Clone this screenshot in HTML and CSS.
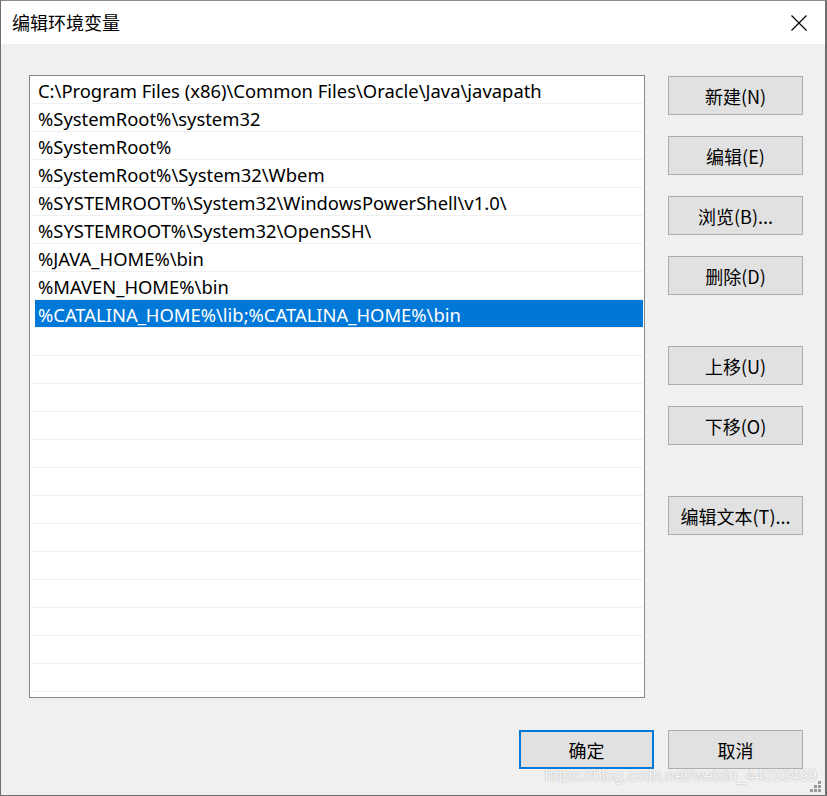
FILE: index.html
```html
<!DOCTYPE html>
<html lang="zh-CN">
<head>
    <meta charset="UTF-8">
    <title>编辑环境变量</title>
    <link rel="stylesheet" href="styles.css">
</head>
<body>
    <div class="window">
        <div class="titlebar">
            <span class="title">编辑环境变量</span>
            <svg class="close" width="16" height="16" viewBox="0 0 16 16">
                <path d="M0.5 0.5 L15.5 15.5 M15.5 0.5 L0.5 15.5" stroke="#000" stroke-width="1.2" fill="none"/>
            </svg>
        </div>

        <div class="content">
            <div class="main">
                <div class="list">
                    <div class="row">C:\Program Files (x86)\Common Files\Oracle\Java\javapath</div>
                    <div class="row">%SystemRoot%\system32</div>
                    <div class="row">%SystemRoot%</div>
                    <div class="row">%SystemRoot%\System32\Wbem</div>
                    <div class="row">%SYSTEMROOT%\System32\WindowsPowerShell\v1.0\</div>
                    <div class="row">%SYSTEMROOT%\System32\OpenSSH\</div>
                    <div class="row">%JAVA_HOME%\bin</div>
                    <div class="row">%MAVEN_HOME%\bin</div>
                    <div class="row selected">%CATALINA_HOME%\lib;%CATALINA_HOME%\bin</div>
                    <div class="row"></div>
                    <div class="row"></div>
                    <div class="row"></div>
                    <div class="row"></div>
                    <div class="row"></div>
                    <div class="row"></div>
                    <div class="row"></div>
                    <div class="row"></div>
                    <div class="row"></div>
                    <div class="row"></div>
                    <div class="row"></div>
                    <div class="row"></div>
                    <div class="row"></div>
                </div>

                <div class="side">
                    <button class="btn">新建(N)</button>
                    <button class="btn">编辑(E)</button>
                    <button class="btn">浏览(B)...</button>
                    <button class="btn">删除(D)</button>
                    <button class="btn group">上移(U)</button>
                    <button class="btn">下移(O)</button>
                    <button class="btn group">编辑文本(T)...</button>
                </div>
            </div>

            <div class="footer">
                <button class="btn default">确定</button>
                <button class="btn">取消</button>
            </div>
        </div>

        <div class="watermark">https://blog.csdn.net/weixin_44010499</div>
        <svg class="grip" width="12" height="12" viewBox="0 0 12 12">
            <rect x="8" y="0" width="3" height="3" fill="#9a9a9a"/>
            <rect x="4" y="4" width="3" height="3" fill="#9a9a9a"/>
            <rect x="8" y="4" width="3" height="3" fill="#9a9a9a"/>
            <rect x="0" y="8" width="3" height="3" fill="#9a9a9a"/>
            <rect x="4" y="8" width="3" height="3" fill="#9a9a9a"/>
            <rect x="8" y="8" width="3" height="3" fill="#9a9a9a"/>
        </svg>
    </div>
</body>
</html>
```

FILE: styles.css
```css
* {
    box-sizing: border-box;
}

body {
    margin: 0;
    font-family: 'Noto Sans', 'Noto Sans CJK SC', sans-serif;
    font-size: 17px;
    color: #000;
    background: #fff;
}

.window {
    position: relative;
    width: 827px;
    height: 796px;
    border-top: 1px solid #8a8a8a;
    border-left: 1px solid #6e6e6e;
    border-right: 2px solid #6e6e6e;
    border-bottom: 1px solid #6e6e6e;
    background-color: #f0f0f0;
    display: flex;
    flex-direction: column;
}

.titlebar {
    height: 43px;
    background-color: #fff;
    display: flex;
    align-items: center;
    justify-content: space-between;
    padding: 0 18px 0 11px;
}

.title {
    font-family: 'Noto Sans CJK SC', sans-serif;
    font-size: 18px;
    padding-bottom: 2px;
}

.close {
    display: block;
}

.content {
    flex: 1;
    padding: 31px 22px 0 28px;
    display: flex;
    flex-direction: column;
}

.main {
    display: flex;
    gap: 23px;
}

.list {
    width: 616px;
    height: 623px;
    background-color: #fff;
    border: 1px solid #828790;
    padding: 0 1px;
    overflow: hidden;
}

.row {
    height: 28px;
    line-height: 27px;
    padding-top: 1px;
    padding-left: 6px;
    font-size: 18.4px;
    border-bottom: 1px solid #f0f0f0;
    margin-left: 1px;
    white-space: nowrap;
}

.row.selected {
    background-color: #0078d7;
    color: #fff;
    margin-left: 4px;
    padding-left: 3px;
}

.side {
    display: flex;
    flex-direction: column;
    gap: 21px;
    padding-top: 1px;
}

.btn {
    width: 135px;
    height: 39px;
    background-color: #e1e1e1;
    border: 1px solid #adadad;
    font-family: 'Noto Sans CJK SC', sans-serif;
    font-size: 18px;
    color: #000;
    padding: 0;
}

.side .group {
    margin-top: 30px;
}

.footer {
    display: flex;
    justify-content: flex-end;
    gap: 14px;
    margin-top: 32px;
}

.btn.default {
    border: 2px solid #0078d7;
}

.watermark {
    position: absolute;
    right: 8px;
    bottom: 11px;
    font-family: 'Liberation Sans', sans-serif;
    font-size: 16px;
    line-height: 16px;
    color: #f6f6f6;
    text-shadow: 0 0 1px #b8b8b8, 0 0 2px #c8c8c8;
}

.grip {
    position: absolute;
    right: 3px;
    bottom: 2px;
}
```
